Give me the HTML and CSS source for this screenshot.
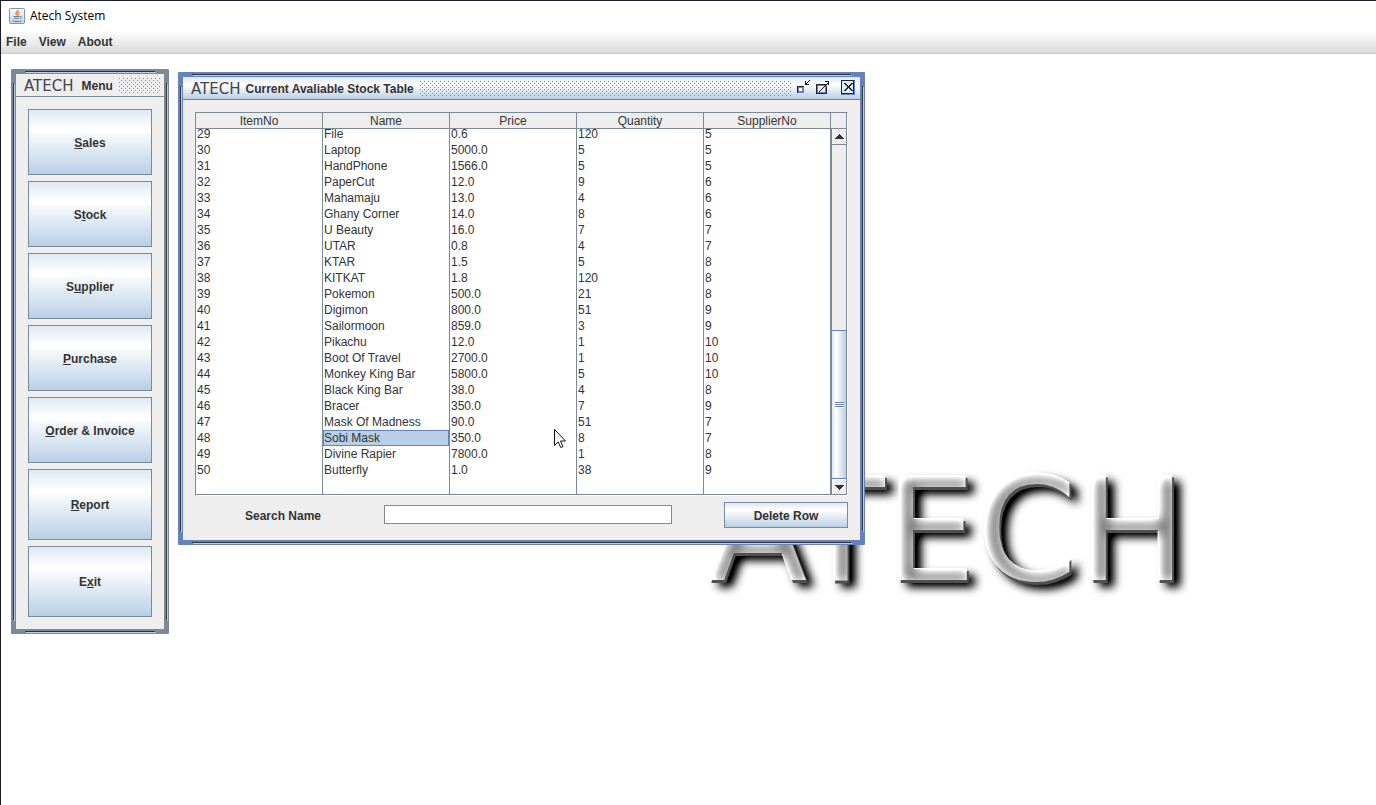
FILE: index.html
```html
<!DOCTYPE html>
<html lang="en">
<head>
<meta charset="utf-8">
<title>Atech System</title>
<link rel="stylesheet" href="styles.css">
</head>
<body>
<header class="titlebar">
  <svg class="java" width="16" height="16" viewBox="0 0 16 16" aria-hidden="true">
    <defs><linearGradient id="jbg" x1="0" y1="0" x2="0" y2="1"><stop offset="0" stop-color="#fafcfd"/><stop offset="1" stop-color="#c3d1dc"/></linearGradient></defs>
    <rect x=".5" y=".5" width="15" height="15" rx="1" fill="url(#jbg)" stroke="#7d97ab"/>
    <path d="M8.500 1.500c1.500 2-2.500 2.500-1.500 4.200.4.600.8.900.7 1.700M10.700 3.800c-1.700.8-2.400 1.500-1.700 2.500.3.500.2.900-.1 1.300" fill="none" stroke="#ee7d24" stroke-width="1.300"/>
    <path d="M4.500 8.500h6M5.200 10.300h4.800M3.500 12.800c2.500.9 6.500.9 9 0M11 8.500c2-.6 2.200 1.200.2 2" fill="none" stroke="#5a83a6" stroke-width="1"/>
  </svg>
  <h1 class="apptitle">Atech System</h1>
</header>
<nav class="menubar">
  <button type="button">File</button>
  <button type="button">View</button>
  <button type="button">About</button>
</nav>
<main class="desktop">
  <svg class="wordmark" width="540" height="240" viewBox="0 0 540 240">
    <defs>
      <filter id="metal" x="-5%" y="-10%" width="112%" height="125%" color-interpolation-filters="sRGB">
        <feGaussianBlur in="SourceAlpha" stdDeviation="5" result="sh"/>
        <feOffset in="sh" dx="8" dy="7" result="shmove"/>
        <feColorMatrix in="shmove" values="0 0 0 0 0 0 0 0 0 0 0 0 0 0 0 0 0 0 1.200 0" result="shadow"/>
        <feOffset in="SourceAlpha" dx="2" dy="3" result="low"/>
        <feFlood flood-color="#505050"/>
        <feComposite in2="low" operator="in" result="side"/>
        <feGaussianBlur in="SourceAlpha" stdDeviation="6" result="soft"/>
        <feOffset in="soft" dx="3" dy="3" result="softmove"/>
        <feColorMatrix in="softmove" values="0 0 0 -.9 1.350 0 0 0 -.9 1.350 0 0 0 -.9 1.350 0 0 0 0 1"/>
        <feComposite in2="SourceAlpha" operator="in" result="face"/>
        <feOffset in="SourceAlpha" dx="1" dy="1" result="in1"/>
        <feComposite in="SourceAlpha" in2="in1" operator="out" result="rim"/>
        <feFlood flood-color="#fff"/>
        <feComposite in2="rim" operator="in" result="shine"/>
        <feMerge><feMergeNode in="shadow"/><feMergeNode in="side"/><feMergeNode in="face"/><feMergeNode in="shine"/></feMerge>
      </filter>
    </defs>
    <text class="bigtext" x="9" y="159" filter="url(#metal)">ATECH</text>
  </svg>

  <section class="frame menu" aria-label="Menu">
    <header class="bar">
      <span class="logo">ATECH</span>
      <h2>Menu</h2>
      <span class="grip"></span>
    </header>
    <div class="buttons">
      <button type="button" class="btn"><span><u>S</u>ales</span></button>
      <button type="button" class="btn"><span>S<u>t</u>ock</span></button>
      <button type="button" class="btn"><span>S<u>u</u>pplier</span></button>
      <button type="button" class="btn"><span><u>P</u>urchase</span></button>
      <button type="button" class="btn"><span><u>O</u>rder &amp; Invoice</span></button>
      <button type="button" class="btn tall"><span><u>R</u>eport</span></button>
      <button type="button" class="btn tall"><span>E<u>x</u>it</span></button>
    </div>
  </section>

  <section class="frame active stock" aria-label="Current Avaliable Stock Table">
    <header class="bar">
      <span class="logo">ATECH</span>
      <h2>Current Avaliable Stock Table</h2>
      <span class="grip"></span>
      <span class="controls">
        <button type="button" aria-label="Minimize"><svg width="14" height="16" shape-rendering="crispEdges"><path d="M1 6h7v7H1z" fill="#223"/><path d="M2 7h6v6H2z" fill="#6382bf"/><path d="M3 8h3v3H3z" fill="#fff"/><path d="M9 1h1v3h3v1H9zM10 3h1v1h-1zM11 2h1v1h-1zM12 1h1v1h-1zM13 0h1v1h-1z" fill="#111"/></svg></button>
        <button type="button" aria-label="Maximize"><svg width="18" height="16" shape-rendering="crispEdges"><path d="M0 4h11v10H0z" fill="#223"/><path d="M1 5h10v9H1z" fill="#6382bf"/><path d="M2 6h7v6H2z" fill="#e6eef7"/><path d="M0 4h9v1H0zM0 4h1v10H0zM0 13h11v1H0zM10 7h1v7h-1z" fill="#223"/><path d="M3 11h1v1H3zM4 10h1v1H4zM5 9h1v1H5zM6 8h1v1H6zM7 7h1v1H7zM8 6h1v1H8zM9 5h1v1H9zM10 4h1v1h-1zM11 3h1v1h-1zM9 1h4v4h-1V2H9z" fill="#111"/></svg></button>
        <button type="button" aria-label="Close"><svg width="16" height="16" shape-rendering="crispEdges"><path d="M1 0h14v15H1z" fill="#6382bf"/><path d="M1.500.500h12v13h-12z" fill="#dfe9f4" stroke="#223"/><path d="M4 3h2v1h1v1h1v1h1V5h1V4h1V3h2v1h-1v1h-1v1h-1v2h1v1h1v1h1v1h-2v-1h-1V9H9V8H8v1H7v1H6v1H4v-1h1V9h1V8h1V6H6V5H5V4H4z" fill="#223"/></svg></button>
      </span>
    </header>
    <div class="content">
      <div class="scrollpane">
        <table>
          <thead><tr><th>ItemNo</th><th>Name</th><th>Price</th><th>Quantity</th><th>SupplierNo</th></tr></thead>
          <tbody>
            <tr class="cut"><td>29</td><td>File</td><td>0.6</td><td>120</td><td>5</td></tr>
            <tr><td>30</td><td>Laptop</td><td>5000.0</td><td>5</td><td>5</td></tr>
            <tr><td>31</td><td>HandPhone</td><td>1566.0</td><td>5</td><td>5</td></tr>
            <tr><td>32</td><td>PaperCut</td><td>12.0</td><td>9</td><td>6</td></tr>
            <tr><td>33</td><td>Mahamaju</td><td>13.0</td><td>4</td><td>6</td></tr>
            <tr><td>34</td><td>Ghany Corner</td><td>14.0</td><td>8</td><td>6</td></tr>
            <tr><td>35</td><td>U Beauty</td><td>16.0</td><td>7</td><td>7</td></tr>
            <tr><td>36</td><td>UTAR</td><td>0.8</td><td>4</td><td>7</td></tr>
            <tr><td>37</td><td>KTAR</td><td>1.5</td><td>5</td><td>8</td></tr>
            <tr><td>38</td><td>KITKAT</td><td>1.8</td><td>120</td><td>8</td></tr>
            <tr><td>39</td><td>Pokemon</td><td>500.0</td><td>21</td><td>8</td></tr>
            <tr><td>40</td><td>Digimon</td><td>800.0</td><td>51</td><td>9</td></tr>
            <tr><td>41</td><td>Sailormoon</td><td>859.0</td><td>3</td><td>9</td></tr>
            <tr><td>42</td><td>Pikachu</td><td>12.0</td><td>1</td><td>10</td></tr>
            <tr><td>43</td><td>Boot Of Travel</td><td>2700.0</td><td>1</td><td>10</td></tr>
            <tr><td>44</td><td>Monkey King Bar</td><td>5800.0</td><td>5</td><td>10</td></tr>
            <tr><td>45</td><td>Black King Bar</td><td>38.0</td><td>4</td><td>8</td></tr>
            <tr><td>46</td><td>Bracer</td><td>350.0</td><td>7</td><td>9</td></tr>
            <tr><td>47</td><td>Mask Of Madness</td><td>90.0</td><td>51</td><td>7</td></tr>
            <tr><td>48</td><td class="selected">Sobi Mask</td><td>350.0</td><td>8</td><td>7</td></tr>
            <tr><td>49</td><td>Divine Rapier</td><td>7800.0</td><td>1</td><td>8</td></tr>
            <tr><td>50</td><td>Butterfly</td><td>1.0</td><td>38</td><td>9</td></tr>
            <tr class="filler"><td></td><td></td><td></td><td></td><td></td></tr>
          </tbody>
        </table>
        <div class="side">
          <div class="corner"></div>
          <button type="button" class="arrow" aria-label="Scroll up"><svg width="9" height="5" shape-rendering="crispEdges"><path d="M4 0h1v1h1v1h1v1h1v1h1v1H0V4h1V3h1V2h1V1h1z" fill="#333"/></svg></button>
          <div class="track"><div class="thumb"></div></div>
          <button type="button" class="arrow down" aria-label="Scroll down"><svg width="9" height="5" shape-rendering="crispEdges"><path d="M0 0h9v1H8v1H7v1H6v1H5v1H4V4H3V3H2V2H1V1H0z" fill="#333"/></svg></button>
        </div>
      </div>
      <form class="search">
        <label for="q">Search Name</label>
        <input id="q" type="text">
        <button type="button" class="btn">Delete Row</button>
      </form>
    </div>
  </section>

  <svg class="cursor" width="12" height="20" viewBox="0 0 12 20" aria-hidden="true"><path d="M.5.500v16l3.700-3.600 2.500 5.600 2.300-1-2.500-5.500h5z" fill="#fff" stroke="#111"/></svg>
</main>
</body>
</html>
```

FILE: styles.css
```css
* { box-sizing: border-box; }
body {
  margin: 0;
  min-height: 100vh;
  display: flex;
  flex-direction: column;
  border-top: 1px solid #1b1b2b;
  border-left: 1px solid #1b1b2b;
  background: #fff;
  color: #333;
  font: 12px/16px "Liberation Sans", Arial, sans-serif;
  overflow: hidden;
}
h1, h2 { margin: 0; font-size: 12px; }
button { font: inherit; color: inherit; }

.titlebar { display: flex; align-items: center; gap: 5px; height: 30px; padding-left: 8px; }
.apptitle { font: 12px/16px "Open Sans", "Noto Sans", sans-serif; color: #000; }
.menubar {
  display: flex;
  gap: 12px;
  height: 23px;
  padding: 0 5px;
  border-bottom: 1px solid #ccc;
  background: linear-gradient(#fff, #dadada);
}
.menubar button { padding: 0; border: 0; background: none; font-weight: bold; }

.desktop { position: relative; flex: 1; }
.wordmark { position: absolute; left: 698px; top: 367px; }
.bigtext { font: 145px "DejaVu Sans", sans-serif; }
.cursor { position: absolute; left: 553px; top: 375px; }

.frame {
  --edge: #7a8a99;
  --lite: #b8cfe5;
  position: absolute;
  padding: 5px;
  border-radius: 1px;
  background:
    linear-gradient(#eee, #eee) 5px 5px / calc(100% - 10px) calc(100% - 10px) no-repeat,
    linear-gradient(#333, #333) 14px 2px / calc(100% - 28px) 1px no-repeat,
    linear-gradient(var(--lite), var(--lite)) 15px 3px / calc(100% - 28px) 1px no-repeat,
    linear-gradient(#333, #333) left 14px bottom 2px / calc(100% - 28px) 1px no-repeat,
    linear-gradient(var(--lite), var(--lite)) left 15px bottom 1px / calc(100% - 28px) 1px no-repeat,
    linear-gradient(#333, #333) 2px 14px / 1px calc(100% - 28px) no-repeat,
    linear-gradient(var(--lite), var(--lite)) 3px 15px / 1px calc(100% - 28px) no-repeat,
    linear-gradient(#333, #333) right 2px top 14px / 1px calc(100% - 28px) no-repeat,
    linear-gradient(var(--lite), var(--lite)) right 1px top 15px / 1px calc(100% - 28px) no-repeat,
    var(--edge);
}
.frame.active { --edge: #6382bf; }
.menu { left: 10px; top: 15px; width: 158px; }
.stock { left: 177px; top: 18px; width: 687px; }

.bar {
  display: flex;
  align-items: center;
  height: 23px;
  padding: 0 4px 0 8px;
  border-bottom: 1px solid var(--edge);
}
.active .bar { background: linear-gradient(#dde8f3, #fff 35%, #b8cfe5); }
.logo { padding-top: 2px; font: 15px/20px "DejaVu Sans", sans-serif; color: #444; margin-right: 8px; }
.active .logo { margin-right: 5px; }
.bar h2 { padding-top: 2px; }
.grip {
  flex: 1;
  height: 15px;
  margin-left: 6px;
  background-image:
    conic-gradient(at 1px 1px, transparent 75%, var(--edge) 0),
    conic-gradient(at 1px 1px, transparent 75%, var(--edge) 0);
  background-size: 4px 4px;
  background-position: 0 0, 2px 2px;
}
.controls { display: flex; gap: 6px; margin-left: 5px; }
.controls button { display: block; padding: 0; border: 0; background: none; }
.controls svg { display: block; }

.buttons { display: flex; flex-direction: column; gap: 6px; padding: 12px; }
.btn {
  padding: 2px 0 0;
  border: 1px solid #7a8a99;
  background: linear-gradient(#dde8f3, #fff 30%, #b8cfe5);
  font-weight: bold;
}
.buttons .btn { height: 66px; }
.buttons .tall { height: 71px; padding: 0; }

.content { padding: 12px; }
.scrollpane {
  display: grid;
  grid-template-columns: 1fr 16px;
  height: 384px;
  border: 1px solid #7a8a99;
  border-right-color: #fff;
  border-bottom-color: #fff;
}
table { width: 100%; height: 382px; border-collapse: separate; border-spacing: 0; table-layout: fixed; background: #fff; border-bottom: 1px solid #7a8a99; }
th {
  height: 16px;
  padding: 2px 0 0;
  line-height: 13px;
  font-weight: normal;
  background: #eee;
  border-right: 1px solid #7a8a99;
  border-bottom: 1px solid #7a8a99;
}
td { height: 16px; padding: 0 0 0 1px; border-right: 1px solid #7a8a99; line-height: 16px; }
.cut td { height: 13px; line-height: 10px; vertical-align: top; }
.filler td { height: auto; }
td.selected { background: #b8cfe5; box-shadow: inset 0 0 0 1px #6382bf; }
.side { display: flex; flex-direction: column; border-right: 1px solid #7a8a99; border-bottom: 1px solid #7a8a99; }
.corner { height: 16px; background: #eee; border-bottom: 1px solid #7a8a99; }
.arrow {
  display: flex;
  align-items: center;
  justify-content: center;
  height: 16px;
  padding: 0;
  border: 1px solid #7a8a99;
  border-width: 0 0 1px 1px;
  background: #eee;
  box-shadow: inset 1px 1px #fff;
}
.arrow.down { height: 15px; padding-top: 2px; border-bottom: 0; }
.track { flex: 1; display: flex; flex-direction: column; justify-content: flex-end; border-left: 1px solid #7a8a99; background: #eee; }
.thumb {
  height: 149px;
  border: 1px solid #6382bf;
  border-width: 1px 0;
  background:
    repeating-linear-gradient(#6382bf 0 1px, #fff 1px 2px) 3px 71px / 9px 6px no-repeat,
    linear-gradient(90deg, #dde8f3, #fff 30%, #b8cfe5);
}

.search { display: flex; align-items: center; margin-top: 6px; padding-left: 50px; }
.search label { width: 139px; padding-top: 2px; font-weight: bold; }
.search input {
  flex: 1;
  height: 19px;
  margin: 0 52px 2px 0;
  padding: 0 2px;
  border: 1px solid #7a8a99;
  background: #fff;
  font: inherit;
}
.search .btn { width: 124px; height: 26px; }
```
